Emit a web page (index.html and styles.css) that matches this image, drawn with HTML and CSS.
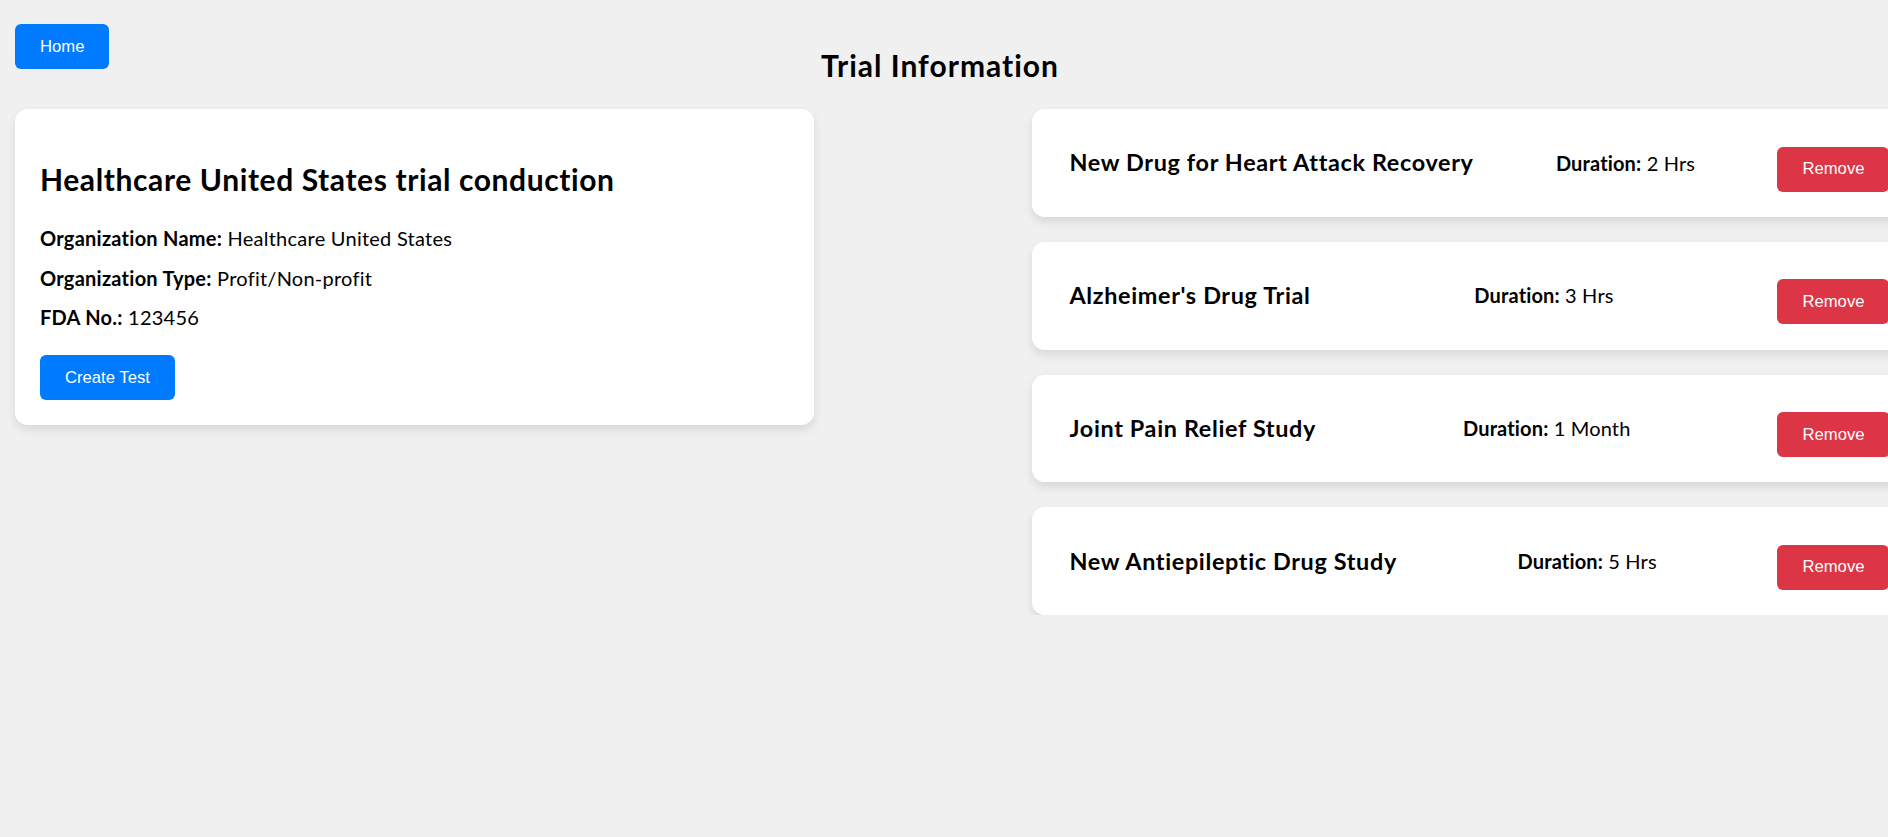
FILE: index.html
```html
<!DOCTYPE html>
<html lang="en">
<head>
<meta charset="utf-8">
<title>Trial Information</title>
<link rel="stylesheet" href="styles.css">
</head>
<body>
<div class="page">
  <header class="header">
    <div class="header-left"><button class="btn btn-primary">Home</button></div>
    <h2 class="page-title">Trial Information</h2>
    <div class="header-right"></div>
  </header>
  <main class="main">
    <section class="org-card">
      <h2 class="org-title">Healthcare United States trial conduction</h2>
      <p class="org-line"><strong>Organization Name:</strong> Healthcare United States</p>
      <p class="org-line"><strong>Organization Type:</strong> Profit/Non-profit</p>
      <p class="org-line"><strong>FDA No.:</strong> 123456</p>
      <button class="btn btn-primary btn-create">Create Test</button>
    </section>
    <section class="trials">
      <div class="trial-card">
        <h3 class="trial-name">New Drug for Heart Attack Recovery</h3>
        <p class="trial-duration"><strong>Duration:</strong> 2 Hrs</p>
        <button class="btn btn-danger">Remove</button>
      </div>
      <div class="trial-card">
        <h3 class="trial-name">Alzheimer's Drug Trial</h3>
        <p class="trial-duration"><strong>Duration:</strong> 3 Hrs</p>
        <button class="btn btn-danger">Remove</button>
      </div>
      <div class="trial-card">
        <h3 class="trial-name">Joint Pain Relief Study</h3>
        <p class="trial-duration"><strong>Duration:</strong> 1 Month</p>
        <button class="btn btn-danger">Remove</button>
      </div>
      <div class="trial-card">
        <h3 class="trial-name">New Antiepileptic Drug Study</h3>
        <p class="trial-duration"><strong>Duration:</strong> 5 Hrs</p>
        <button class="btn btn-danger">Remove</button>
      </div>
    </section>
  </main>
</div>
</body>
</html>
```
FILE: styles.css
```css
html, body {
  margin: 0;
  padding: 0;
  background: #f0f0f0;
  overflow: hidden;
}
body {
  font-family: Lato, "Noto Sans", sans-serif;
  color: #000;
}
.page {
  padding: 0 15px;
  width: 1888px;
  box-sizing: border-box;
}
.header {
  display: grid;
  grid-template-columns: 1fr auto 1fr;
  align-items: start;
}
.header-left {
  margin-top: 24px;
}
.page-title {
  margin: 45px 0 24px;
  padding-right: 8px;
  font-size: 30px;
  line-height: 40px;
  font-weight: 700;
  letter-spacing: 1px;
  text-align: center;
}
.btn {
  font-family: "Liberation Sans", Arial, sans-serif;
  font-size: 16.67px;
  line-height: 20px;
  padding: 12.5px 25px;
  border: none;
  border-radius: 6px;
  color: #fff;
  cursor: pointer;
}
.btn-primary { background: #007bff; }
.btn-danger { background: #dc3545; margin-top: 12.5px; }
.main {
  display: flex;
  align-items: flex-start;
  gap: 218px;
}
.org-card {
  flex: 0 0 799px;
  box-sizing: border-box;
  background: #fff;
  border-radius: 12.5px;
  padding: 25px;
  box-shadow: 0 5px 10px rgba(0, 0, 0, 0.1);
}
.org-title {
  margin: 25px 0;
  font-size: 30px;
  line-height: 40px;
  letter-spacing: 0.6px;
}
.org-line {
  margin: 12.5px 0;
  font-size: 20px;
  line-height: 27px;
  letter-spacing: 0.25px;
  position: relative;
  top: 1px;
}
.btn-create {
  display: block;
  margin-top: 25px;
}
.trials {
  flex: 0 0 895px;
  display: flex;
  flex-direction: column;
  gap: 25px;
}
.trial-card {
  box-sizing: border-box;
  background: #fff;
  border-radius: 12.5px;
  padding: 15px 37.5px;
  display: flex;
  justify-content: space-between;
  align-items: center;
  box-shadow: 0 5px 10px rgba(0, 0, 0, 0.1);
}
.trial-name {
  margin: 23.4px 0;
  font-size: 23.4px;
  line-height: 31px;
  font-weight: 700;
  letter-spacing: 0.65px;
}
.trial-duration {
  margin: 20px 0;
  font-size: 20px;
  line-height: 26.6px;
  letter-spacing: 0.15px;
}
```
